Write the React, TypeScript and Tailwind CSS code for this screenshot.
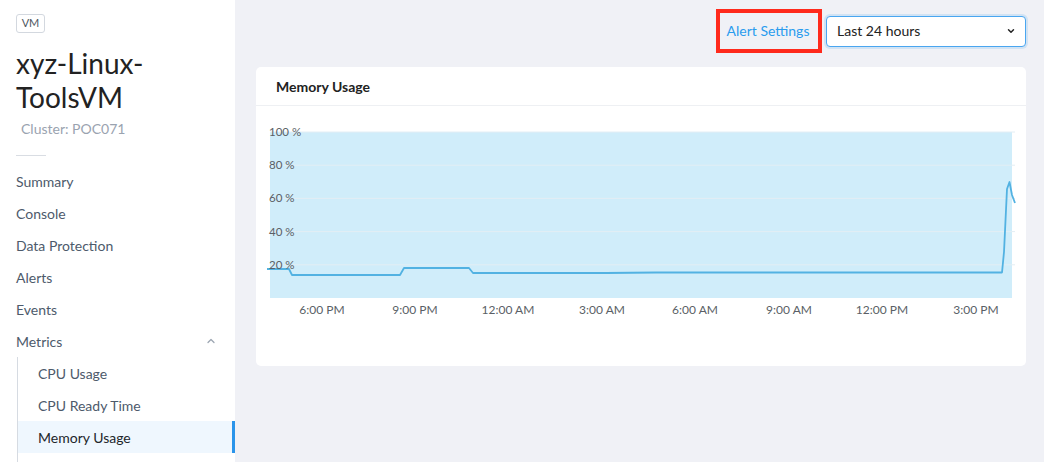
import { ChevronDown, ChevronUp } from 'lucide-react';

const navItems = ['Summary', 'Console', 'Data Protection', 'Alerts', 'Events'];
const metricItems = ['CPU Usage', 'CPU Ready Time', 'Memory Usage'];

const yTicks = [
    { label: '100 %', y: 26 },
    { label: '80 %', y: 59.2 },
    { label: '60 %', y: 92.4 },
    { label: '40 %', y: 125.6 },
    { label: '20 %', y: 158.8 },
];

const xTicks = [
    { label: '6:00 PM', x: 66 },
    { label: '9:00 PM', x: 159 },
    { label: '12:00 AM', x: 252 },
    { label: '3:00 AM', x: 346 },
    { label: '6:00 AM', x: 439 },
    { label: '9:00 AM', x: 533 },
    { label: '12:00 PM', x: 626 },
    { label: '3:00 PM', x: 720 },
];

const linePoints =
    '11,163 33,163 36,169 144,169 148,162 213,162 217,167 350,167 400,166.5 746,166.5 748,146 751,83 753.5,76 756,89 759,97';

function MemoryChart() {
    return (
        <svg width="770" height="259" viewBox="0 0 770 259" className="block">
            {/* plot area */}
            <rect x="14" y="26" width="742" height="166" fill="#d0edfa" />
            {yTicks.map((t) => (
                <line key={t.label} x1="14" x2="759" y1={t.y} y2={t.y} stroke="#e3eef4" strokeWidth="1" />
            ))}
            <polyline points={linePoints} fill="none" stroke="#52b2e2" strokeWidth="1.8" strokeLinejoin="round" />
            {yTicks.map((t) => (
                <text key={t.label} x="13" y={t.y + 4} fontSize="11.5" fill="#5a5f66">
                    {t.label}
                </text>
            ))}
            {xTicks.map((t) => (
                <text key={t.label} x={t.x} y="208" fontSize="12" fill="#5a5f66" textAnchor="middle">
                    {t.label}
                </text>
            ))}
        </svg>
    );
}

export default function App() {
    return (
        <div className="flex h-[462px] w-[1044px] overflow-hidden bg-[#f0f1f6] font-['Lato','Open_Sans',sans-serif]">
            {/* Sidebar */}
            <aside className="w-[235px] shrink-0 bg-white pl-4">
                <div className="mt-[14px] inline-flex h-[19px] w-[29px] items-center justify-center rounded-[3px] border border-[#d3d8df] text-[11px] text-[#4d5560]">
                    VM
                </div>
                <h1 className="mt-[13px] text-[28px] leading-[34px] font-normal text-[#222]">
                    xyz-Linux-
                    <br />
                    ToolsVM
                </h1>
                <div className="mt-[5px] pl-[5px] text-[14px] leading-[20px] text-[#9aa3b0]">Cluster: POC071</div>
                <div className="mt-[16px] h-px w-[30px] bg-[#d9dde3]" />

                <nav className="mt-[9px]">
                    {navItems.map((item) => (
                        <div key={item} className="flex h-8 items-center text-[14px] text-[#4d5a6b]">
                            {item}
                        </div>
                    ))}
                    <div className="flex h-8 items-center justify-between pr-[18px] text-[14px] text-[#4d5a6b]">
                        Metrics
                        <ChevronUp className="h-3 w-3 text-[#9ca6b2]" strokeWidth={2.5} />
                    </div>
                    <div className="ml-px border-l border-[#d6dbe2]">
                        {metricItems.map((item) => {
                            const active = item === 'Memory Usage';
                            return (
                                <div
                                    key={item}
                                    className={
                                        active
                                            ? 'relative flex h-8 items-center bg-[#eff7fe] pl-5 text-[14px] text-[#22262b]'
                                            : 'flex h-8 items-center pl-5 text-[14px] text-[#4d5a6b]'
                                    }
                                >
                                    {item}
                                    {active && <span className="absolute top-0 right-0 h-8 w-[3px] bg-[#2a94ea]" />}
                                </div>
                            );
                        })}
                        <div className="h-3" />
                    </div>
                </nav>
            </aside>

            {/* Main */}
            <main className="flex-1 pt-[9px] pr-[18px] pl-[21px]">
                <div className="flex h-[44px] items-center justify-end gap-1">
                    <div className="flex h-[44px] w-[106px] items-center justify-center border-4 border-[#ff2a1c] pr-[2px] pb-px text-[14px] text-[#2a9cee]">
                        Alert Settings
                    </div>
                    <div className="flex h-[31px] w-[200px] items-center justify-between rounded-[4px] border border-[#4aa6f0] bg-white pr-[9px] pb-px pl-[10px] text-[14px] text-[#222] shadow-[0_0_0_2px_rgba(74,166,240,0.18)]">
                        Last 24 hours
                        <ChevronDown className="h-[10px] w-[10px] text-[#222]" strokeWidth={3.5} />
                    </div>
                </div>

                <section className="mt-[14px] h-[299px] rounded-[5px] bg-white">
                    <div className="flex h-[39px] items-center border-b border-[#eef0f3] px-5 text-[14px] font-bold text-[#222]">
                        Memory Usage
                    </div>
                    <MemoryChart />
                </section>
            </main>
        </div>
    );
}
